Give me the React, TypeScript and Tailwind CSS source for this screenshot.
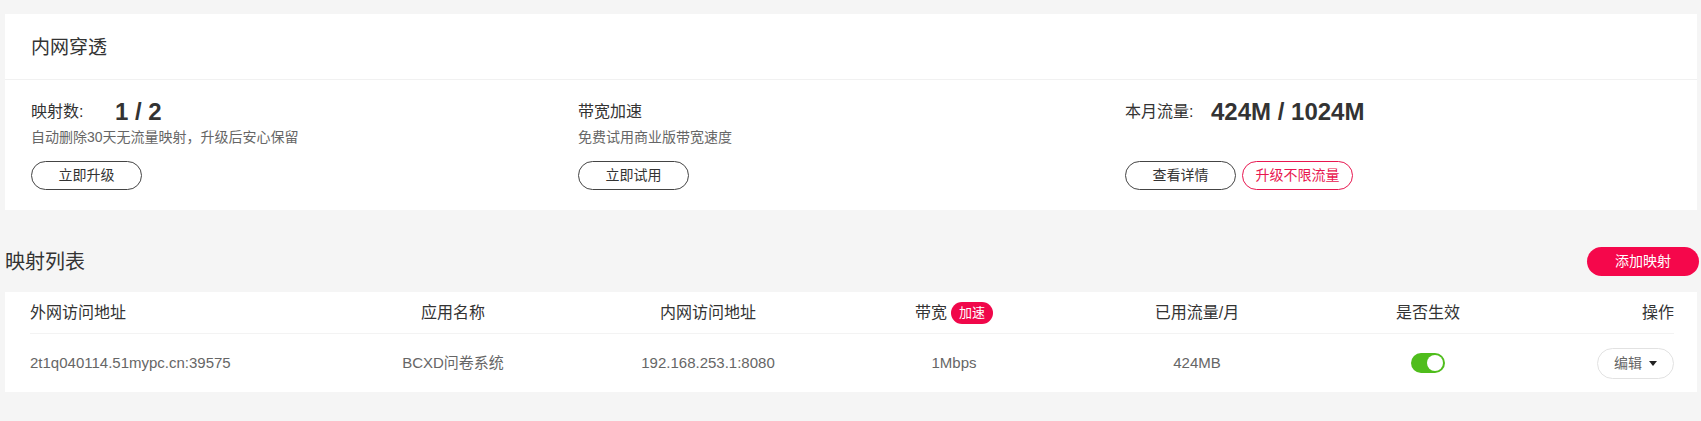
import React from "react";

const FONT = { fontFamily: '"Liberation Sans", "Noto Sans CJK SC", sans-serif' };

function OutlineBtn({ children, red }: { children: React.ReactNode; red?: boolean }) {
  return (
    <button
      className={
        red
          ? "w-[111px] h-[29px] rounded-full border border-[#e8164f] text-[#e8164f] text-[14px] flex items-center justify-center bg-white"
          : "w-[111px] h-[29px] rounded-full border border-[#444444] text-[#333333] text-[14px] flex items-center justify-center bg-white"
      }
    >
      {children}
    </button>
  );
}

export default function App() {
  return (
    <div style={FONT} className="min-h-[421px] bg-[#f5f5f5] pl-[5px] pr-[2px] pt-[14px] text-[#333333]">
      {/* Top card */}
      <div className="mr-[2px] bg-white">
        <div className="h-[66px] flex items-center pl-[26px] pt-[4px] border-b border-[#f1f1f1]">
          <span className="text-[19px] text-[#333333]">内网穿透</span>
        </div>
        <div className="grid grid-cols-3 pl-[26px] pr-[25px] pt-[16px] pb-[20px]">
          <div className="flex flex-col">
            <div className="h-[31px] flex items-center">
              <span className="text-[16px] min-w-[84px]">映射数:</span>
              <span className="text-[24px] font-bold text-[#333333]">1 / 2</span>
            </div>
            <div className="h-[20px] flex items-center text-[14px] text-[#666666]">自动删除30天无流量映射，升级后安心保留</div>
            <div className="mt-[14px]">
              <OutlineBtn>立即升级</OutlineBtn>
            </div>
          </div>
          <div className="flex flex-col">
            <div className="h-[31px] flex items-center">
              <span className="text-[16px]">带宽加速</span>
            </div>
            <div className="h-[20px] flex items-center text-[14px] text-[#666666]">免费试用商业版带宽速度</div>
            <div className="mt-[14px]">
              <OutlineBtn>立即试用</OutlineBtn>
            </div>
          </div>
          <div className="flex flex-col">
            <div className="h-[31px] flex items-center">
              <span className="text-[16px] min-w-[86px]">本月流量:</span>
              <span className="text-[24px] font-bold text-[#333333]">424M / 1024M</span>
            </div>
            <div className="h-[20px]" />
            <div className="mt-[14px] flex gap-[6px]">
              <OutlineBtn>查看详情</OutlineBtn>
              <OutlineBtn red>升级不限流量</OutlineBtn>
            </div>
          </div>
        </div>
      </div>

      {/* List header */}
      <div className="flex items-center justify-between mt-[35px] mb-[15px]">
        <span className="text-[20px] text-[#333333] pt-[2px]">映射列表</span>
        <button className="w-[112px] h-[29px] rounded-full bg-[#f5074b] text-white text-[14px] flex items-center justify-center">
          添加映射
        </button>
      </div>

      {/* Table */}
      <div className="mr-[2px] bg-white pl-[25px] pr-[23px]">
        <div className="grid grid-cols-[300px_246px_264px_228px_258px_204px_144px] h-[42px] items-center text-[16px] text-[#333333] border-b border-[#f3f3f3]">
          <div>外网访问地址</div>
          <div className="text-center">应用名称</div>
          <div className="text-center">内网访问地址</div>
          <div className="flex items-center justify-center">
            <span>带宽</span>
            <span className="ml-[4px] h-[22px] w-[42px] rounded-full bg-[#f0074a] text-white text-[13px] flex items-center justify-center">加速</span>
          </div>
          <div className="text-center">已用流量/月</div>
          <div className="text-center">是否生效</div>
          <div className="text-right">操作</div>
        </div>
        <div className="grid grid-cols-[300px_246px_264px_228px_258px_204px_144px] h-[58px] items-center text-[15px] text-[#666666]">
          <div>2t1q040114.51mypc.cn:39575</div>
          <div className="text-center">BCXD问卷系统</div>
          <div className="text-center">192.168.253.1:8080</div>
          <div className="text-center">1Mbps</div>
          <div className="text-center">424MB</div>
          <div className="flex justify-center">
            <div className="w-[34px] h-[20px] rounded-full bg-[#4fbd1c] flex items-center justify-end pr-[2px]">
              <div className="w-[16px] h-[16px] rounded-full bg-white" />
            </div>
          </div>
          <div className="flex justify-end">
            <button className="w-[77px] h-[31px] rounded-full border border-[#e2e2e2] bg-white flex items-center justify-center gap-[7px] text-[14px] text-[#666666]">
              <span>编辑</span>
              <svg width="8" height="5" viewBox="0 0 8 5">
                <path d="M0 0 L8 0 L4 5 Z" fill="#222222" />
              </svg>
            </button>
          </div>
        </div>
      </div>
    </div>
  );
}
